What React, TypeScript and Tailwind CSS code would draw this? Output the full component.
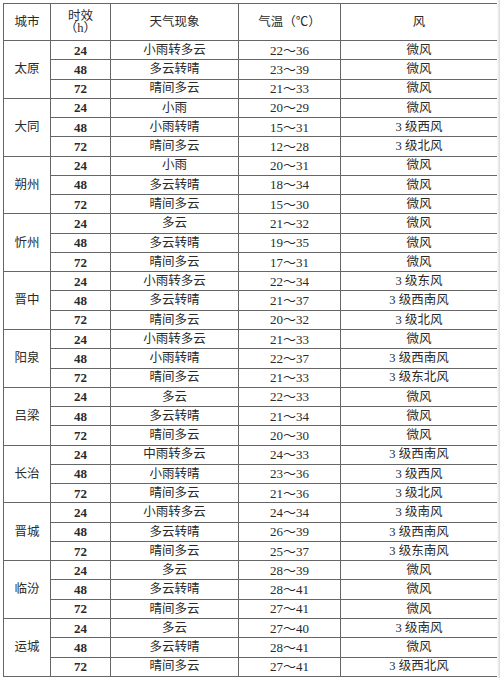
const rows: { city: string; items: [string, string, string, string][] }[] = [
  { city: "太原", items: [["24", "小雨转多云", "22～36", "微风"], ["48", "多云转晴", "23～39", "微风"], ["72", "晴间多云", "21～33", "微风"]] },
  { city: "大同", items: [["24", "小雨", "20～29", "微风"], ["48", "小雨转晴", "15～31", "3 级西风"], ["72", "晴间多云", "12～28", "3 级北风"]] },
  { city: "朔州", items: [["24", "小雨", "20～31", "微风"], ["48", "多云转晴", "18～34", "微风"], ["72", "晴间多云", "15～30", "微风"]] },
  { city: "忻州", items: [["24", "多云", "21～32", "微风"], ["48", "多云转晴", "19～35", "微风"], ["72", "晴间多云", "17～31", "微风"]] },
  { city: "晋中", items: [["24", "小雨转多云", "22～34", "3 级东风"], ["48", "多云转晴", "21～37", "3 级西南风"], ["72", "晴间多云", "20～32", "3 级北风"]] },
  { city: "阳泉", items: [["24", "小雨转多云", "21～33", "微风"], ["48", "小雨转晴", "22～37", "3 级西南风"], ["72", "晴间多云", "21～33", "3 级东北风"]] },
  { city: "吕梁", items: [["24", "多云", "22～33", "微风"], ["48", "多云转晴", "21～34", "微风"], ["72", "晴间多云", "20～30", "微风"]] },
  { city: "长治", items: [["24", "中雨转多云", "24～33", "3 级西南风"], ["48", "小雨转晴", "23～36", "3 级西风"], ["72", "晴间多云", "21～36", "3 级北风"]] },
  { city: "晋城", items: [["24", "小雨转多云", "24～34", "3 级南风"], ["48", "多云转晴", "26～39", "3 级西南风"], ["72", "晴间多云", "25～37", "3 级东南风"]] },
  { city: "临汾", items: [["24", "多云", "28～39", "微风"], ["48", "多云转晴", "28～41", "微风"], ["72", "晴间多云", "27～41", "微风"]] },
  { city: "运城", items: [["24", "多云", "27～40", "3 级南风"], ["48", "多云转晴", "28～41", "微风"], ["72", "晴间多云", "27～41", "3 级西北风"]] },
];

const cell = "border border-[#666] p-0 text-center align-middle leading-none";

export default function App() {
  return (
    <div
      className="relative w-[500px] h-[678px] bg-white overflow-hidden pt-[3px] pl-[3px] text-[12.5px] text-[#2a2a2a]"
      style={{ fontFamily: '"Liberation Serif", "Noto Sans CJK SC", serif' }}
    >
      <table className="w-[494px] table-fixed border-collapse border-[1.5px] border-[#444]">
        <colgroup>
          <col className="w-[47px]" />
          <col className="w-[60px]" />
          <col className="w-[128px]" />
          <col className="w-[102px]" />
          <col className="w-[157px]" />
        </colgroup>
        <thead>
          <tr className="h-[37px]">
            <th className={`${cell} font-normal`}>城市</th>
            <th className={`${cell} font-normal leading-[17px]`}>
              时效
              <br />
              （h）
            </th>
            <th className={`${cell} font-normal`}>天气现象</th>
            <th className={`${cell} font-normal`}>气温（℃）</th>
            <th className={`${cell} font-normal`}>风</th>
          </tr>
        </thead>
        <tbody>
          {rows.map((block) =>
            block.items.map((item, i) => (
              <tr key={block.city + i} className="h-[19.27px]">
                {i === 0 && (
                  <td rowSpan={3} className={`${cell} border-[#444]`}>
                    {block.city}
                  </td>
                )}
                <td className={`${cell} text-[13px] font-semibold`}>{item[0]}</td>
                <td className={cell}>{item[1]}</td>
                <td className={`${cell} text-[13px]`}>{item[2]}</td>
                <td className={cell}>{item[3]}</td>
              </tr>
            ))
          )}
        </tbody>
      </table>
      <div className="absolute top-0 right-0 w-[3px] h-full bg-gradient-to-r from-white to-[#d8d8d8]" />
    </div>
  );
}
